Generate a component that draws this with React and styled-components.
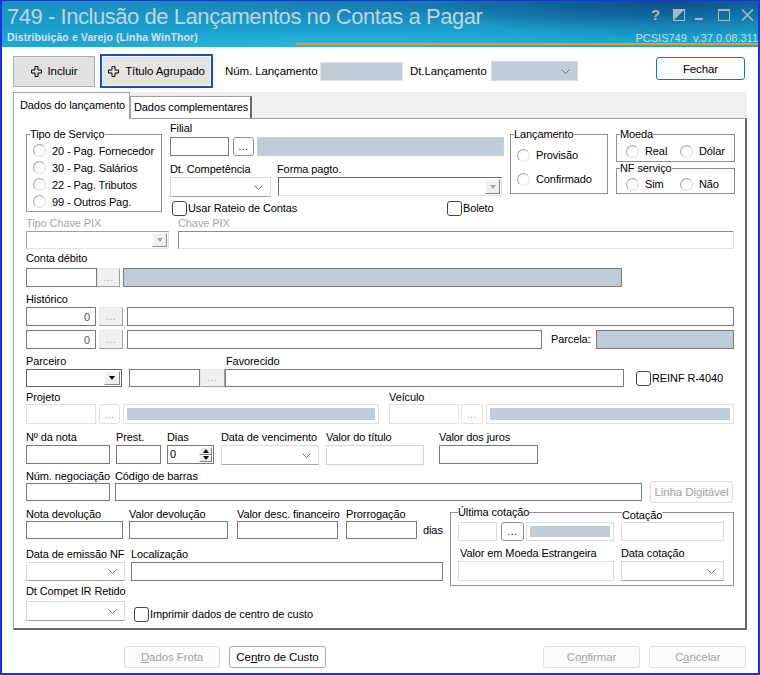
import React from 'react';
import styled, { createGlobalStyle, css } from 'styled-components';

const GlobalStyle = createGlobalStyle`
  * { box-sizing: border-box; }
  html, body { margin: 0; padding: 0; background: #ffffff; }
  body {
    font-family: "Liberation Sans", Arial, sans-serif;
    font-size: 11px;
    letter-spacing: -0.1px;
    color: #000;
  }
  button { font-family: inherit; letter-spacing: inherit; }
`;

const ml = css`
  margin-left: ${p => p.$ml || 0}px;
`;

const Window = styled.div`
  width: 760px;
  height: 675px;
  display: flex;
  flex-direction: column;
  background: #fff;
  border: 2px solid #1933dd;
  border-top: 1px solid #1933dd;
  overflow: hidden;
`;

/* ---------- title bar ---------- */

const TitleBar = styled.header`
  flex: none;
  height: 46px;
  display: flex;
  justify-content: space-between;
  padding: 0 0 0 5px;
  background:
    linear-gradient(#f39a1e, #f39a1e) no-repeat 294px 42px / 480px 2px,
    radial-gradient(ellipse 330px 60px at 88% -8%, rgba(6, 50, 110, 0.7), rgba(6, 50, 110, 0) 72%),
    radial-gradient(ellipse 520px 34px at 62% 8%, rgba(8, 70, 130, 0.35), rgba(8, 70, 130, 0) 70%),
    radial-gradient(ellipse 420px 30px at 45% 105%, rgba(80, 215, 245, 0.35), rgba(80, 215, 245, 0) 70%),
    linear-gradient(180deg, #1a8fbe 0%, #1c9dc9 55%, #1aaad6 100%);
`;

const TitleText = styled.div`
  display: flex;
  flex-direction: column;
  padding-top: 3px;
`;

const AppTitle = styled.div`
  font-size: 22px;
  line-height: 25px;
  letter-spacing: -0.45px;
  color: #bcd5e5;
  white-space: nowrap;
`;

const AppSub = styled.div`
  font-size: 10.5px;
  font-weight: bold;
  line-height: 13px;
  margin-top: 2px;
  letter-spacing: 0.1px;
  color: #d3e5f0;
  white-space: nowrap;
`;

const TitleSide = styled.div`
  display: flex;
  flex-direction: column;
  align-items: flex-end;
  padding-top: 6px;
`;

const Controls = styled.div`
  display: flex;
  align-items: center;
  height: 15px;
  margin-right: 4px;
  color: #a9b8c4;
`;

const Help = styled.span`
  font-size: 15px;
  font-weight: bold;
  line-height: 15px;
`;

const Ctl = styled.svg`
  display: block;
  ${ml}
`;

const Version = styled.div`
  margin-top: 10px;
  font-size: 11px;
  line-height: 13px;
  letter-spacing: 0;
  color: #c9dbe7;
  white-space: pre;
`;

/* ---------- toolbar ---------- */

const Toolbar = styled.div`
  flex: none;
  height: 45px;
  display: flex;
  align-items: center;
  padding: 7px 13px 4px 11px;
`;

const ToolButton = styled.button`
  flex: none;
  width: ${p => p.$w}px;
  height: ${p => (p.$focus ? 34 : 31)}px;
  ${ml}
  display: flex;
  align-items: center;
  justify-content: center;
  gap: 6px;
  padding: 0;
  font-size: 11.5px;
  color: #000;
  background: ${p => (p.$focus ? '#e6e3e3' : '#e1e1e1')};
  border: ${p => (p.$focus ? '2px solid #0a52d2' : '1px solid #adadad')};
  box-shadow: ${p => (p.$focus ? 'inset 0 0 0 1px #f7f7f7' : 'none')};
`;

const CloseButton = styled.button`
  flex: none;
  width: 89px;
  height: 23px;
  margin: 0 0 5px auto;
  padding: 0;
  font-size: 11.5px;
  background: #fff;
  border: 1px solid #0078d7;
  border-radius: 3px;
`;

const ToolLabel = styled.span`
  flex: none;
  width: ${p => p.$w}px;
  ${ml}
  font-size: 11.5px;
  white-space: nowrap;
`;

/* ---------- tabs ---------- */

const TabArea = styled.div`
  margin: 0 11px;
  display: flex;
  flex-direction: column;
`;

const TabStrip = styled.div`
  height: 26px;
  display: flex;
  align-items: flex-end;
  background: #f0f0f0;
`;

const Tab = styled.div`
  position: relative;
  z-index: 1;
  width: ${p => p.$w}px;
  height: ${p => (p.$active ? 27 : 22)}px;
  margin-bottom: ${p => (p.$active ? -1 : 0)}px;
  padding-left: ${p => (p.$active ? 6 : 3)}px;
  padding-top: ${p => (p.$active ? 6 : 4)}px;
  background: #fff;
  border: 1px solid #a0a0a0;
  border-bottom: 0;
  border-right: ${p => (p.$active ? '1px solid #a0a0a0' : '2px solid #6b6b6b')};
  white-space: nowrap;
  line-height: 13px;
`;

const Panel = styled.div`
  height: 512px;
  padding: 3px 0 0 12px;
  background: #fff;
  border: 1px solid #a0a0a0;
  border-right: 2px solid #696969;
  border-bottom: 2px solid #696969;
`;

/* ---------- form primitives ---------- */

const Row = styled.div`
  display: flex;
  align-items: ${p => p.$align || 'flex-start'};
  margin-top: ${p => p.$mt || 0}px;
`;

const Stack = styled.div`
  flex: none;
  display: flex;
  flex-direction: column;
  width: ${p => (p.$w ? `${p.$w}px` : 'auto')};
  margin-top: ${p => p.$mt || 0}px;
  ${ml}
`;

const Label = styled.span`
  display: block;
  flex: none;
  height: 13px;
  line-height: 13px;
  white-space: nowrap;
  width: ${p => (p.$w ? `${p.$w}px` : 'auto')};
  ${ml}
  color: ${p => (p.$off ? '#a6a6a6' : '#000')};
  background: ${p => (p.$onLine ? '#fff' : 'transparent')};
  align-self: ${p => p.$self || 'auto'};
`;

const Field = styled.div`
  flex: none;
  width: ${p => p.$w}px;
  height: ${p => p.$h || 19}px;
  ${ml}
  display: flex;
  align-items: center;
  justify-content: ${p => (p.$right ? 'flex-end' : 'flex-start')};
  padding: ${p => (p.$clip ? '3px' : '0 5px 0 3px')};
  color: #555;
  background: ${p => (p.$clip ? '#c0ccd8 content-box' : p.$bg || '#fff')};
  border: 1px solid ${p => p.$bc || '#7a7a7a'};
  ${p =>
    p.$sunken &&
    css`
      border-color: #8a8a8a #e3e3e3 #e3e3e3 #8a8a8a;
    `}
`;

const Dots = styled.div`
  flex: none;
  width: ${p => p.$w}px;
  height: ${p => p.$h || 19}px;
  ${ml}
  display: flex;
  align-items: flex-end;
  justify-content: center;
  padding-bottom: 3px;
  font-size: 10px;
  line-height: 10px;
  letter-spacing: 0.5px;
  ${p =>
    p.$kind === 'classic'
      ? css`
          color: #a8a8a8;
          background: #f0f0f0;
          border: 1px solid;
          border-color: #e6e6e6 #a0a0a0 #a0a0a0 #e6e6e6;
        `
      : p.$kind === 'soft'
      ? css`
          color: #9a9a9a;
          background: #fff;
          border: 1px solid #e1e1e1;
          border-radius: 3px;
        `
      : css`
          color: #000;
          background: #fff;
          border: 1px solid #8c8c8c;
          border-radius: 3px;
        `}
`;

const Drop = styled.div`
  flex: none;
  width: ${p => p.$w}px;
  height: ${p => p.$h || 20}px;
  ${ml}
  display: flex;
  align-items: center;
  justify-content: flex-end;
  padding-right: 7px;
  background: ${p => p.$bg || '#fff'};
  border: 1px solid #dadada;
  border-bottom-color: ${p => (p.$bg ? '#dadada' : '#a8a8a8')};
`;

const Chevron = () => (
  <svg width="9" height="5" viewBox="0 0 9 5">
    <path d="M0.5 0.5 L4.5 4.5 L8.5 0.5" stroke="#707070" fill="none" />
  </svg>
);

const Combo = styled.div`
  flex: none;
  width: ${p => p.$w}px;
  height: ${p => p.$h || 19}px;
  ${ml}
  display: flex;
  justify-content: flex-end;
  padding: 1px;
  background: #fff;
  border: 1px solid;
  border-color: ${p =>
    p.$frame ? '#646464' : p.$off ? '#a0a0a0 #e3e3e3 #e3e3e3 #a0a0a0' : '#6d6d6d #e3e3e3 #e3e3e3 #6d6d6d'};
`;

const ComboButton = styled.div`
  width: ${p => p.$w || 15}px;
  display: flex;
  align-items: center;
  justify-content: center;
  background: #f0f0f0;
  border: 1px solid;
  border-color: #fdfdfd #8a8a8a #8a8a8a #fdfdfd;
  &::after {
    content: '';
    border-left: 3.5px solid transparent;
    border-right: 3.5px solid transparent;
    border-top: 4px solid ${p => (p.$dark ? '#000' : '#a8a8a8')};
  }
`;

const Spin = styled.div`
  flex: none;
  width: 47px;
  height: 19px;
  display: flex;
  padding: 1px 1px 1px 2px;
  border: 1px solid #7a7a7a;
`;

const SpinValue = styled.span`
  flex: 1;
  line-height: 15px;
`;

const SpinArrows = styled.div`
  width: 13px;
  display: flex;
  flex-direction: column;
`;

const SpinArrow = styled.div`
  flex: 1;
  display: flex;
  align-items: center;
  justify-content: center;
  background: #f0f0f0;
  border: 1px solid;
  border-color: #fdfdfd #808080 #808080 #fdfdfd;
  &::after {
    content: '';
    border-left: 3.5px solid transparent;
    border-right: 3.5px solid transparent;
    ${p => (p.$up ? 'border-bottom: 4px solid #000;' : 'border-top: 4px solid #000;')}
  }
`;

const Group = styled.fieldset`
  flex: none;
  width: ${p => p.$w}px;
  height: ${p => p.$h}px;
  margin: ${p => p.$mt || 0}px 0 0 ${p => p.$ml || 0}px;
  padding: 0;
  min-width: 0;
  border: 1px solid #8f8f8f;
`;

const Legend = styled.legend`
  padding: 0;
  margin-left: ${p => p.$at ?? 3}px;
  line-height: 13px;
  font-size: 11px;
`;

const GroupBody = styled.div`
  display: flex;
  flex-direction: ${p => (p.$row ? 'row' : 'column')};
  gap: ${p => p.$gap || 0}px;
  padding: ${p => p.$pad || '0'};
`;

const Radio = styled.div`
  display: flex;
  align-items: center;
  height: ${p => p.$h || 17}px;
  width: ${p => (p.$w ? `${p.$w}px` : 'auto')};
  white-space: nowrap;
  &::before {
    content: '';
    flex: none;
    width: 11px;
    height: 11px;
    margin-right: 6px;
    border-radius: 50%;
    border: 1px solid #a8a8a8;
    border-right-color: #dddddd;
    border-bottom-color: #dddddd;
    background: radial-gradient(circle at 55% 55%, #ffffff 45%, #e6e6e6 100%);
  }
`;

const Check = styled.div`
  flex: none;
  display: flex;
  align-items: center;
  height: 14px;
  width: ${p => (p.$w ? `${p.$w}px` : 'auto')};
  ${ml}
  white-space: nowrap;
  &::before {
    content: '';
    flex: none;
    width: 13px;
    height: 13px;
    margin-right: 1px;
    border: 1px solid #444;
    border-radius: 3px;
    background: #fff;
  }
`;

const PlainButton = styled.button`
  flex: none;
  width: ${p => p.$w}px;
  height: 22px;
  ${ml}
  padding: 0;
  font-size: 11.5px;
  color: ${p => (p.$off ? '#a3a3a3' : '#000')};
  background: ${p => (p.$off ? '#fbfbfb' : '#fff')};
  border: 1px solid ${p => (p.$off ? '#e0e0e0' : '#adadad')};
  border-radius: 3px;
  align-self: ${p => p.$self || 'auto'};
  margin-bottom: ${p => p.$mb || 0}px;
  u { text-decoration: underline; }
`;

const Footer = styled.div`
  display: flex;
  margin-top: 16px;
  padding: 0 10px 0 122px;
`;

const Plus = () => (
  <svg width="11" height="11" viewBox="0 0 11 11">
    <path d="M4 0.5h3v3.5h3.5v3H7v3.5H4V7H0.5V4H4z" fill="none" stroke="#000" />
  </svg>
);

export default function App() {
  return (
    <>
      <GlobalStyle />
      <Window>
        <TitleBar>
          <TitleText>
            <AppTitle>749 - Inclusão de Lançamentos no Contas a Pagar</AppTitle>
            <AppSub>Distribuição e Varejo (Linha WinThor)</AppSub>
          </TitleText>
          <TitleSide>
            <Controls>
              <Help>?</Help>
              <Ctl $ml={13} width="12" height="12" viewBox="0 0 12 12">
                <rect x="0.5" y="0.5" width="11" height="11" fill="none" stroke="currentColor" />
                <path d="M1 11 L11 1 L1 1 Z" fill="currentColor" />
              </Ctl>
              <Ctl $ml={10} width="8" height="12" viewBox="0 0 8 12">
                <rect x="0" y="9" width="8" height="2" fill="currentColor" />
              </Ctl>
              <Ctl $ml={15} width="12" height="12" viewBox="0 0 12 12">
                <rect x="0.5" y="0.5" width="11" height="11" fill="none" stroke="currentColor" />
                <rect x="0" y="0" width="12" height="2" fill="currentColor" />
              </Ctl>
              <Ctl $ml={11} width="13" height="12" viewBox="0 0 13 12">
                <path d="M1 0.5 L12 11.5 M12 0.5 L1 11.5" stroke="currentColor" strokeWidth="1.6" />
              </Ctl>
            </Controls>
            <Version>PCSIS749  v.37.0.08.311</Version>
          </TitleSide>
        </TitleBar>

        <Toolbar>
          <ToolButton $w={82}>
            <Plus />
            Incluir
          </ToolButton>
          <ToolButton $w={113} $ml={5} $focus>
            <Plus />
            Título Agrupado
          </ToolButton>
          <ToolLabel $w={95} $ml={12}>Núm. Lançamento</ToolLabel>
          <Field $w={83} $h={19} $bg="#c0ccd8" $bc="#e4e4e4" />
          <ToolLabel $w={81} $ml={7}>Dt.Lançamento</ToolLabel>
          <Drop $w={87} $h={20} $bg="#c0ccd8">
            <Chevron />
          </Drop>
          <CloseButton>Fechar</CloseButton>
        </Toolbar>

        <TabArea>
          <TabStrip>
            <Tab $active $w={117}>Dados do lançamento</Tab>
            <Tab $w={122}>Dados complementares</Tab>
          </TabStrip>
          <Panel>
            <Row>
              <Group $w={136} $h={84} $mt={6}>
                <Legend>Tipo de Serviço</Legend>
                <GroupBody $pad="1px 0 0 6px">
                  <Radio>20 - Pag. Fornecedor</Radio>
                  <Radio>30 - Pag. Salários</Radio>
                  <Radio>22 - Pag. Tributos</Radio>
                  <Radio>99 - Outros Pag.</Radio>
                </GroupBody>
              </Group>

              <Stack $ml={8} $w={334}>
                <Label>Filial</Label>
                <Row $mt={2}>
                  <Field $w={59} />
                  <Dots $ml={4} $w={21}>...</Dots>
                  <Field $ml={3} $w={247} $bg="#c0ccd8" $bc="#c8d1da" />
                </Row>
                <Row $mt={7}>
                  <Label $w={107}>Dt. Competência</Label>
                  <Label>Forma pagto.</Label>
                </Row>
                <Row $mt={1}>
                  <Drop $w={101}>
                    <Chevron />
                  </Drop>
                  <Combo $ml={7} $w={224}>
                    <ComboButton />
                  </Combo>
                </Row>
                <Row $mt={4}>
                  <Check $ml={2} $w={275}>Usar Rateio de Contas</Check>
                  <Check>Boleto</Check>
                </Row>
              </Stack>

              <Group $w={98} $h={66} $mt={6} $ml={6}>
                <Legend>Lançamento</Legend>
                <GroupBody $pad="4px 0 0 6px" $gap={4}>
                  <Radio $h={20}>Provisão</Radio>
                  <Radio $h={20}>Confirmado</Radio>
                </GroupBody>
              </Group>

              <Stack $ml={8} $w={119} $mt={6}>
                <Group $w={119} $h={34}>
                  <Legend>Moeda</Legend>
                  <GroupBody $row $pad="0 0 0 9px">
                    <Radio $h={20} $w={54}>Real</Radio>
                    <Radio $h={20}>Dólar</Radio>
                  </GroupBody>
                </Group>
                <Group $w={119} $h={32}>
                  <Legend>NF serviço</Legend>
                  <GroupBody $row $pad="0 0 0 9px">
                    <Radio $h={18} $w={54}>Sim</Radio>
                    <Radio $h={18}>Não</Radio>
                  </GroupBody>
                </Group>
              </Stack>
            </Row>

            <Row $mt={2}>
              <Label $w={152} $off>Tipo Chave PIX</Label>
              <Label $off>Chave PIX</Label>
            </Row>
            <Row $mt={1}>
              <Combo $w={143} $h={18} $off>
                <ComboButton />
              </Combo>
              <Field $ml={9} $w={556} $h={18} $sunken />
            </Row>

            <Row $mt={3}>
              <Label>Conta débito</Label>
            </Row>
            <Row $mt={3}>
              <Field $w={71} />
              <Dots $kind="classic" $w={23}>...</Dots>
              <Field $ml={3} $w={499} $bg="#c0ccd8" />
            </Row>

            <Row $mt={6}>
              <Label>Histórico</Label>
            </Row>
            <Row $mt={1}>
              <Field $w={70} $right>0</Field>
              <Dots $kind="classic" $ml={3} $w={24}>...</Dots>
              <Field $ml={4} $w={607} />
            </Row>
            <Row $mt={4} $align="center">
              <Field $w={70} $right>0</Field>
              <Dots $kind="classic" $ml={3} $w={24}>...</Dots>
              <Field $ml={4} $w={415} />
              <Label $ml={9} $w={45}>Parcela:</Label>
              <Field $w={138} $bg="#c0ccd8" />
            </Row>

            <Row $mt={6}>
              <Label $w={200}>Parceiro</Label>
              <Label>Favorecido</Label>
            </Row>
            <Row $mt={1} $align="center">
              <Combo $w={96} $h={18} $frame>
                <ComboButton $dark $w={16} />
              </Combo>
              <Field $ml={7} $w={71} $h={18} />
              <Dots $kind="classic" $w={25} $h={18}>...</Dots>
              <Field $w={399} $h={18} />
              <Check $ml={12}>REINF R-4040</Check>
            </Row>

            <Row $mt={4}>
              <Label $w={363}>Projeto</Label>
              <Label>Veículo</Label>
            </Row>
            <Row>
              <Field $w={70} $h={20} $bc="#e1e1e1" />
              <Dots $kind="soft" $ml={3} $w={21} $h={20}>...</Dots>
              <Field $ml={3} $w={256} $h={20} $bc="#e1e1e1" $clip />
              <Field $ml={10} $w={70} $h={20} $bc="#e1e1e1" />
              <Dots $kind="soft" $ml={2} $w={22} $h={20}>...</Dots>
              <Field $ml={3} $w={248} $h={20} $bc="#e1e1e1" $clip />
            </Row>

            <Row $mt={7}>
              <Stack $w={84}>
                <Label>Nº da nota</Label>
                <Row $mt={1}>
                  <Field $w={84} />
                </Row>
              </Stack>
              <Stack $w={45} $ml={6}>
                <Label>Prest.</Label>
                <Row $mt={1}>
                  <Field $w={45} />
                </Row>
              </Stack>
              <Stack $w={47} $ml={6}>
                <Label>Dias</Label>
                <Row $mt={1}>
                  <Spin>
                    <SpinValue>0</SpinValue>
                    <SpinArrows>
                      <SpinArrow $up />
                      <SpinArrow />
                    </SpinArrows>
                  </Spin>
                </Row>
              </Stack>
              <Stack $w={98} $ml={7}>
                <Label>Data de vencimento</Label>
                <Row $mt={1}>
                  <Drop $w={98}>
                    <Chevron />
                  </Drop>
                </Row>
              </Stack>
              <Stack $w={98} $ml={7}>
                <Label>Valor do título</Label>
                <Row $mt={1}>
                  <Field $w={98} $h={20} $bc="#d4d4d4" />
                </Row>
              </Stack>
              <Stack $w={99} $ml={15}>
                <Label>Valor dos juros</Label>
                <Row $mt={1}>
                  <Field $w={99} />
                </Row>
              </Stack>
            </Row>

            <Row $mt={5}>
              <Stack $w={84}>
                <Label>Núm. negociação</Label>
                <Field $w={84} $h={18} />
              </Stack>
              <Stack $w={527} $ml={5}>
                <Label>Código de barras</Label>
                <Field $w={527} $h={18} />
              </Stack>
              <PlainButton $off $w={83} $ml={8} $self="flex-end" $mb={-2}>
                Linha Digitável
              </PlainButton>
            </Row>

            <Row $mt={5}>
              <Stack $w={417}>
                <Row $mt={2}>
                  <Label $w={103}>Nota devolução</Label>
                  <Label $w={108}>Valor devolução</Label>
                  <Label $w={109}>Valor desc. financeiro</Label>
                  <Label>Prorrogação</Label>
                </Row>
                <Row $align="center">
                  <Field $w={97} $h={18} />
                  <Field $ml={6} $w={99} $h={18} />
                  <Field $ml={9} $w={101} $h={18} />
                  <Field $ml={8} $w={71} $h={18} />
                  <Label $ml={6}>dias</Label>
                </Row>
                <Row $mt={9}>
                  <Label $w={105}>Data de emissão NF</Label>
                  <Label>Localização</Label>
                </Row>
                <Row $mt={1}>
                  <Drop $w={99} $h={19}>
                    <Chevron />
                  </Drop>
                  <Field $ml={6} $w={312} />
                </Row>
                <Row $mt={4}>
                  <Label>Dt Compet IR Retido</Label>
                </Row>
                <Row $mt={3} $align="flex-end">
                  <Drop $w={99}>
                    <Chevron />
                  </Drop>
                  <Check $ml={9}>Imprimir dados de centro de custo</Check>
                </Row>
              </Stack>

              <Group $w={284} $h={80} $ml={7}>
                <Legend $at={7}>Última cotação</Legend>
                <GroupBody $pad="3px 0 0 7px">
                  <Row>
                    <Field $w={39} $bc="#dcdcdc" />
                    <Dots $ml={4} $w={23}>...</Dots>
                    <Field $ml={2} $w={88} $bc="#dcdcdc" $clip />
                    <Stack $ml={7} $mt={-13}>
                      <Label $onLine $self="flex-start" $ml={1}>Cotação</Label>
                      <Field $w={103} $bc="#dcdcdc" />
                    </Stack>
                  </Row>
                  <Row $mt={6}>
                    <Label $ml={2} $w={161}>Valor em Moeda Estrangeira</Label>
                    <Label>Data cotação</Label>
                  </Row>
                  <Row $mt={1}>
                    <Field $w={156} $h={20} $bc="#dcdcdc" />
                    <Drop $ml={7} $w={103}>
                      <Chevron />
                    </Drop>
                  </Row>
                </GroupBody>
              </Group>
            </Row>
          </Panel>
        </TabArea>

        <Footer>
          <PlainButton $off $w={96}>
            <u>D</u>ados Frota
          </PlainButton>
          <PlainButton $w={97} $ml={9}>
            Ce<u>n</u>tro de Custo
          </PlainButton>
          <PlainButton $off $w={97} $ml={217}>
            Co<u>n</u>firmar
          </PlainButton>
          <PlainButton $off $w={97} $ml={9}>
            C<u>a</u>ncelar
          </PlainButton>
        </Footer>
      </Window>
    </>
  );
}
